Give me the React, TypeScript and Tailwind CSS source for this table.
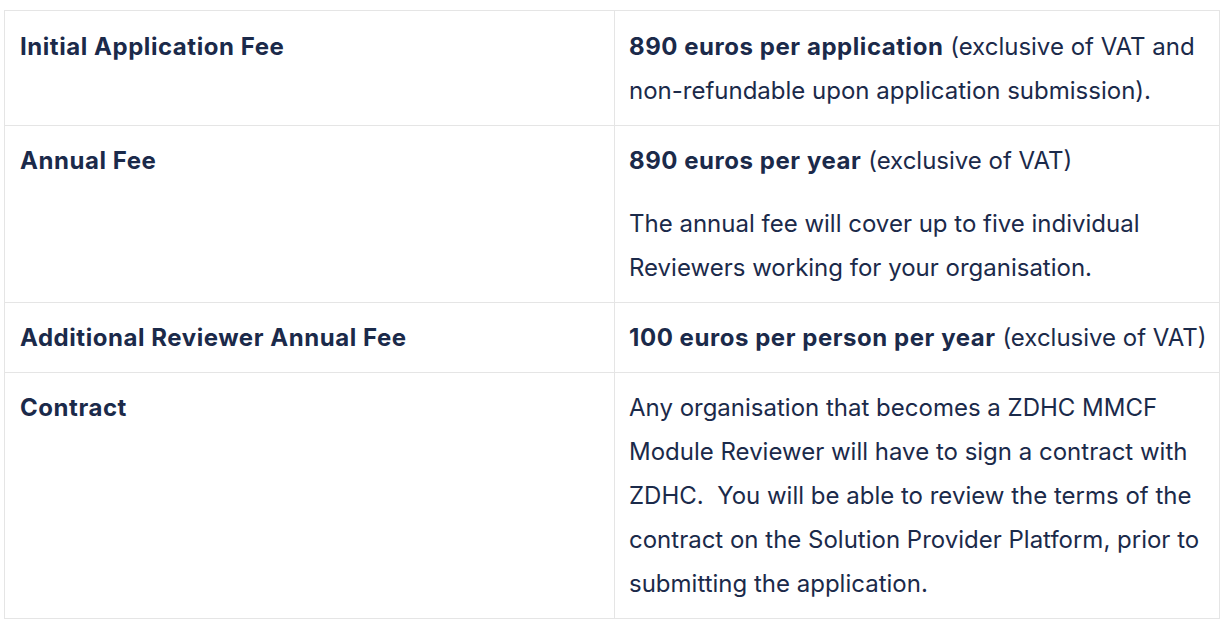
import React from 'react';

interface FeeRow {
  label: string;
  content: React.ReactNode;
}

const rows: FeeRow[] = [
  {
    label: 'Initial Application Fee',
    content: (
      <p>
        <strong className="font-bold tracking-[0.55px]">890 euros per application</strong> (exclusive of VAT and
        non-refundable upon application submission).
      </p>
    ),
  },
  {
    label: 'Annual Fee',
    content: (
      <>
        <p>
          <strong className="font-bold tracking-[0.55px]">890 euros per year</strong> (exclusive of VAT)
        </p>
        <p className="mt-[19px]">The annual fee will cover up to five individual Reviewers working for your organisation.</p>
      </>
    ),
  },
  {
    label: 'Additional Reviewer Annual Fee',
    content: (
      <p className="whitespace-nowrap">
        <strong className="font-bold tracking-[0.55px]">100 euros per person per year</strong> (exclusive of VAT)
      </p>
    ),
  },
  {
    label: 'Contract',
    content: (
      <p>
        Any organisation that becomes a ZDHC MMCF Module Reviewer will have to sign a contract with ZDHC.&nbsp; You will
        be able to review the terms of the contract on the Solution Provider Platform, prior to submitting the
        application.
      </p>
    ),
  },
];

export default function App() {
  return (
    <div className="min-h-screen bg-white pl-[4px] pr-[10px] pt-[10px] font-['Inter',sans-serif] text-[24px] leading-[44px] text-[#1b2a4a]">
      <table className="w-[1216px] table-fixed border-collapse border border-[#e0e0e0]">
        <tbody>
          {rows.map((row, i) => {
            const pad = i === 0 ? 'pt-[14px] pb-[12px]' : 'pt-[13px] pb-[12px]';
            return (
              <tr key={row.label}>
                <td className={`w-[610px] border border-[#e5e5e5] px-[15px] align-top font-bold tracking-[0.55px] ${pad}`}>
                  {row.label}
                </td>
                <td className={`border border-[#e5e5e5] px-[14px] align-top ${pad}`}>{row.content}</td>
              </tr>
            );
          })}
        </tbody>
      </table>
    </div>
  );
}
